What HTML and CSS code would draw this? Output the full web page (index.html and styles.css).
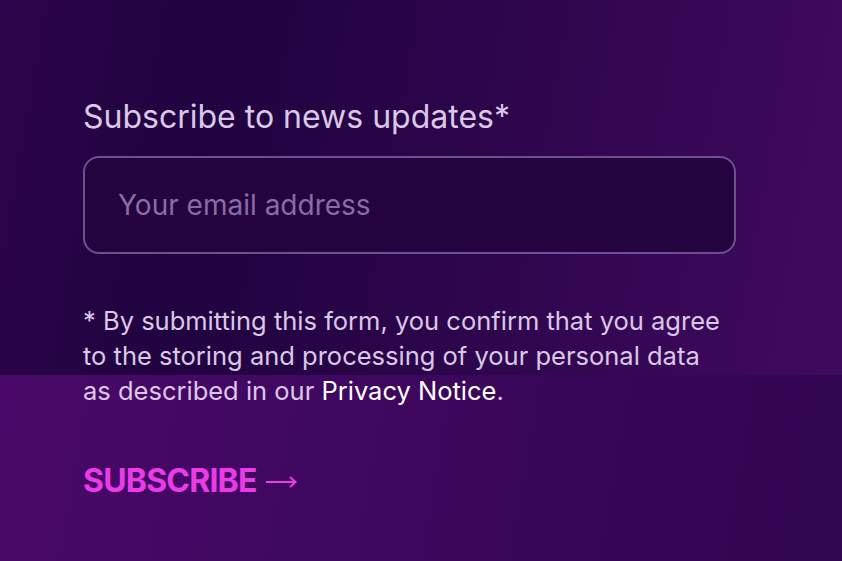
FILE: index.html
```html
<!DOCTYPE html>
<html lang="en">
<head>
  <meta charset="UTF-8">
  <meta name="viewport" content="width=device-width, initial-scale=1.0">
  <title>Newsletter</title>
  <link rel="stylesheet" href="styles.css">
</head>
<body>
  <form class="newsletter" onsubmit="return false">
    <label class="newsletter-label" for="email">Subscribe to news updates*</label>
    <input class="newsletter-input" id="email" type="email" placeholder="Your email address">
    <p class="newsletter-note">* By submitting this form, you confirm that you agree to the storing and processing of your personal data as described in our <a href="#">Privacy Notice</a>.</p>
    <button class="newsletter-submit" type="submit">SUBSCRIBE<svg class="arrow" width="31" height="12" viewBox="0 0 31 12" aria-hidden="true"><path d="M0 6H29.5M24 1L29.5 6L24 11" fill="none" stroke="currentColor" stroke-width="2"/></svg></button>
  </form>
</body>
</html>
```

FILE: styles.css
```css
html, body {
  margin: 0;
  height: 100%;
}

body {
  font-family: 'Inter', 'Noto Sans', sans-serif;
  color: #dac8e6;
  overflow: hidden;
  background:
    linear-gradient(100deg, #2b0549 0%, #200340 25%, #2a0549 50%, #3a0858 85%, #400a5c 100%) top left / 100% 375px no-repeat,
    linear-gradient(100deg, #4a0968 0%, #3e0860 40%, #360655 75%, #300650 100%) bottom left / 100% calc(100% - 375px) no-repeat;
}

.newsletter {
  display: flex;
  flex-direction: column;
  align-items: flex-start;
  padding: 98px 0 0 83px;
}

.newsletter-label {
  font-size: 32px;
  line-height: 38px;
  color: #dac8e6;
}

.newsletter-input {
  box-sizing: border-box;
  width: 653px;
  height: 98px;
  margin-top: 20px;
  padding: 0 33px;
  font-family: inherit;
  font-size: 28px;
  color: #fff;
  background-color: #24043f;
  border: 2px solid #6e5090;
  border-radius: 16px;
  outline: none;
}

.newsletter-input::placeholder {
  color: #8a6ca4;
}

.newsletter-note {
  max-width: 645px;
  margin: 49px 0 0;
  font-size: 25.5px;
  line-height: 35px;
}

.newsletter-note a {
  color: #fff;
  text-decoration: none;
}

.newsletter-submit {
  margin-top: 55px;
  padding: 0;
  font-family: inherit;
  font-size: 32px;
  font-weight: 700;
  line-height: 36px;
  letter-spacing: -0.8px;
  color: #ec3ae9;
  background: none;
  border: none;
  cursor: pointer;
}

.newsletter-submit .arrow {
  margin-left: 9px;
  vertical-align: 4px;
}
```
